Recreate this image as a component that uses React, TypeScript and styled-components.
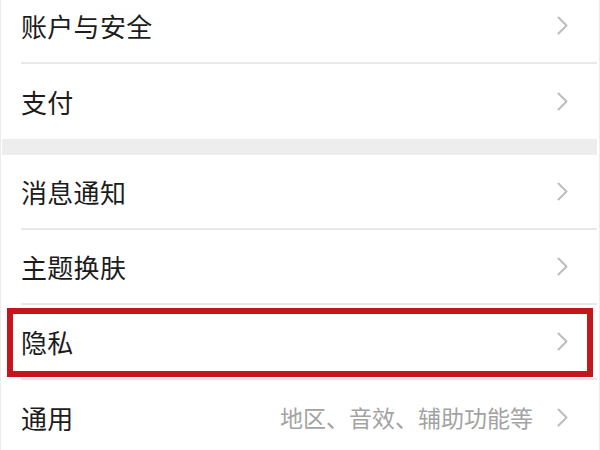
import React from "react";
import styled, { createGlobalStyle } from "styled-components";

const GlobalStyle = createGlobalStyle`
  html, body {
    margin: 0;
    padding: 0;
    background: #ffffff;
    overflow: hidden;
  }
  body {
    font-family: "Noto Sans CJK SC", "Noto Sans", sans-serif;
  }
`;

const Page = styled.div`
  width: 600px;
  height: 450px;
  box-sizing: border-box;
  border-left: 1px solid #ececec;
  border-right: 1px solid #ececec;
  margin: 0 auto;
  padding: 0 2px 0 1px;
  overflow: hidden;
  background: #ffffff;
`;

const Group = styled.div<{ $offset?: number }>`
  display: flex;
  flex-direction: column;
  margin-top: ${(p) => p.$offset ?? 0}px;
  background: #ffffff;
`;

const Gap = styled.div`
  height: 16px;
  background: #ededed;
`;

const Row = styled.div<{ $divider?: boolean }>`
  position: relative;
  display: flex;
  align-items: center;
  height: 75px;
  box-sizing: border-box;
  margin-left: 19px;
  padding-right: 29px;
  border-bottom: ${(p) => (p.$divider ? "2px solid #e9e9e9" : "none")};
`;

const Label = styled.span`
  flex: 1;
  font-size: 26px;
  line-height: 1;
  color: #1c1c1c;
  letter-spacing: 0.3px;
`;

const Hint = styled.span`
  font-size: 23px;
  line-height: 1;
  color: #a3a3a3;
  margin-right: 24px;
`;

const Highlight = styled.div`
  position: absolute;
  top: 3px;
  bottom: 1px;
  left: -14px;
  right: 4px;
  border: 6px solid #c4161c;
  pointer-events: none;
`;

const Chevron = () => (
  <svg width="11" height="19" viewBox="0 0 11 19" fill="none">
    <polyline
      points="1.5,1.5 9.5,9.5 1.5,17.5"
      stroke="#bdbdbd"
      strokeWidth="2"
      strokeLinecap="round"
      strokeLinejoin="round"
    />
  </svg>
);

type Item = { label: string; hint?: string; highlight?: boolean };

const group1: Item[] = [{ label: "账户与安全" }, { label: "支付" }];
const group2: Item[] = [
  { label: "消息通知" },
  { label: "主题换肤" },
  { label: "隐私", highlight: true },
  { label: "通用", hint: "地区、音效、辅助功能等" },
];

const renderRows = (items: Item[]) =>
  items.map((it, i) => (
    <Row key={it.label} $divider={i < items.length - 1}>
      <Label>{it.label}</Label>
      {it.hint && <Hint>{it.hint}</Hint>}
      <Chevron />
      {it.highlight && <Highlight />}
    </Row>
  ));

export default function App() {
  return (
    <>
      <GlobalStyle />
      <Page>
        <Group $offset={-11}>{renderRows(group1)}</Group>
        <Gap />
        <Group>{renderRows(group2)}</Group>
      </Page>
    </>
  );
}
